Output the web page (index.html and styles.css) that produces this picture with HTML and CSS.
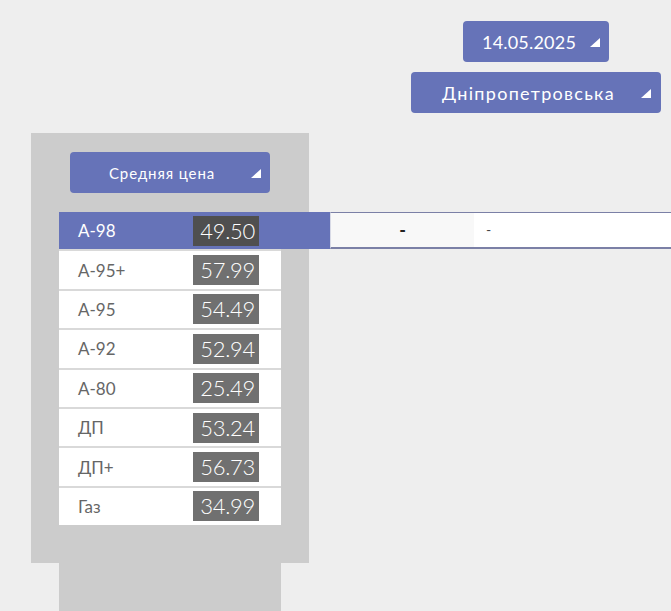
FILE: index.html
```html
<!DOCTYPE html>
<html>
<head>
<meta charset="UTF-8">
<title>Цены на топливо</title>
<meta name="viewport" content="width=device-width, initial-scale=1.0">
<link rel="stylesheet" href="styles.css">
</head>
<body>

<div class="filters">
  <button class="select select-date"><span class="select-text">14.05.2025</span><i class="caret"></i></button>
  <button class="select select-region"><span class="select-text">Дніпропетровська</span><i class="caret"></i></button>
</div>

<div class="stand">
  <div class="board">
    <button class="select select-kind"><span class="select-text">Средняя цена</span><i class="caret"></i></button>
    <ul class="fuel-list">
      <li class="fuel active">
        <span class="fuel-name">А-98</span><span class="fuel-price">49.50</span>
        <div class="fuel-detail"><span class="detail-main">-</span><span class="detail-note">-</span></div>
      </li>
      <li class="fuel"><span class="fuel-name">А-95+</span><span class="fuel-price">57.99</span></li>
      <li class="fuel"><span class="fuel-name">А-95</span><span class="fuel-price">54.49</span></li>
      <li class="fuel"><span class="fuel-name">А-92</span><span class="fuel-price">52.94</span></li>
      <li class="fuel"><span class="fuel-name">А-80</span><span class="fuel-price">25.49</span></li>
      <li class="fuel"><span class="fuel-name">ДП</span><span class="fuel-price">53.24</span></li>
      <li class="fuel"><span class="fuel-name">ДП+</span><span class="fuel-price">56.73</span></li>
      <li class="fuel"><span class="fuel-name">Газ</span><span class="fuel-price">34.99</span></li>
    </ul>
  </div>
  <div class="stand-leg"></div>
</div>

</body>
</html>
```

FILE: styles.css
```css
body {
  margin: 0;
  padding: 0;
  background-color: #eeeeee;
  font-family: Lato, "Liberation Sans", sans-serif;
  overflow: hidden;
}
/* Dropdowns in the top right corner */
.filters {
  display: flex;
  flex-direction: column;
  align-items: center;
  gap: 10px;
  width: 250px;
  margin: 0 10px 0 auto;
  padding-top: 21px;
}
.select {
  display: flex;
  align-items: center;
  height: 41px;
  border: none;
  border-radius: 4px;
  background-color: #6673b8;
  color: white;
  font-family: inherit;
  cursor: pointer;
}
.select-date {
  width: 146px;
  padding: 0 9px 0 19px;
  font-size: 18px;
  letter-spacing: 0.2px;
}
.select-region {
  width: 250px;
  padding: 0 10px 0 31px;
  font-size: 18px;
  letter-spacing: 1.3px;
}
.select-kind {
  width: 200px;
  margin: 0 auto;
  padding: 0 9px 0 39px;
  font-size: 15px;
  letter-spacing: 0.9px;
}
.caret {
  width: 0;
  height: 0;
  margin-left: auto;
  margin-top: 2px;
  border-style: solid;
  border-width: 0 0 9px 10px;
  border-color: transparent transparent white transparent;
}
/* The price board */
.stand {
  margin-top: 20px;
}
.board {
  width: 278px;
  margin-left: 31px;
  padding: 19px 28px 38px;
  box-sizing: border-box;
  background-color: #cccccc;
}
.stand-leg {
  width: 222px;
  height: 60px;
  margin-left: 59px;
  background-color: #cccccc;
}
.fuel-list {
  display: flex;
  flex-direction: column;
  gap: 2px;
  margin: 19px 0 0;
  padding: 0;
  list-style: none;
  background-color: #d9d9d9;
}
.fuel {
  position: relative;
  display: flex;
  align-items: center;
  height: 37.4px;
  padding: 0 22px 0 19px;
  background-color: white;
}
.fuel-name {
  flex: 1;
  color: #666666;
  font-size: 17px;
}
.fuel-price {
  width: 66px;
  height: 30px;
  padding-right: 4px;
  box-sizing: border-box;
  background-color: #707070;
  color: white;
  font-size: 22px;
  font-weight: 300;
  line-height: 30px;
  text-align: right;
  letter-spacing: -0.3px;
}
.fuel.active {
  margin-right: -49px;
  padding-right: 71px;
  background-color: #6673b8;
}
.fuel.active .fuel-name {
  color: white;
}
.fuel.active .fuel-price {
  background-color: #4f4f4f;
}
/* Pops out to the right of the selected row */
.fuel-detail {
  position: absolute;
  top: 0;
  left: 100%;
  display: flex;
  width: 341px;
  height: 37px;
  box-sizing: border-box;
  border-top: 1px solid #7b80a6;
  border-bottom: 2px solid #7b80a6;
  border-left: 1px solid #d8dae6;
  background-color: white;
}
.detail-main {
  width: 143px;
  background-color: #f8f8f8;
  color: #222;
  font-size: 18px;
  font-weight: 700;
  line-height: 34px;
  text-align: center;
}
.detail-note {
  padding-left: 12px;
  color: #444;
  font-size: 14px;
  line-height: 34px;
}
```
